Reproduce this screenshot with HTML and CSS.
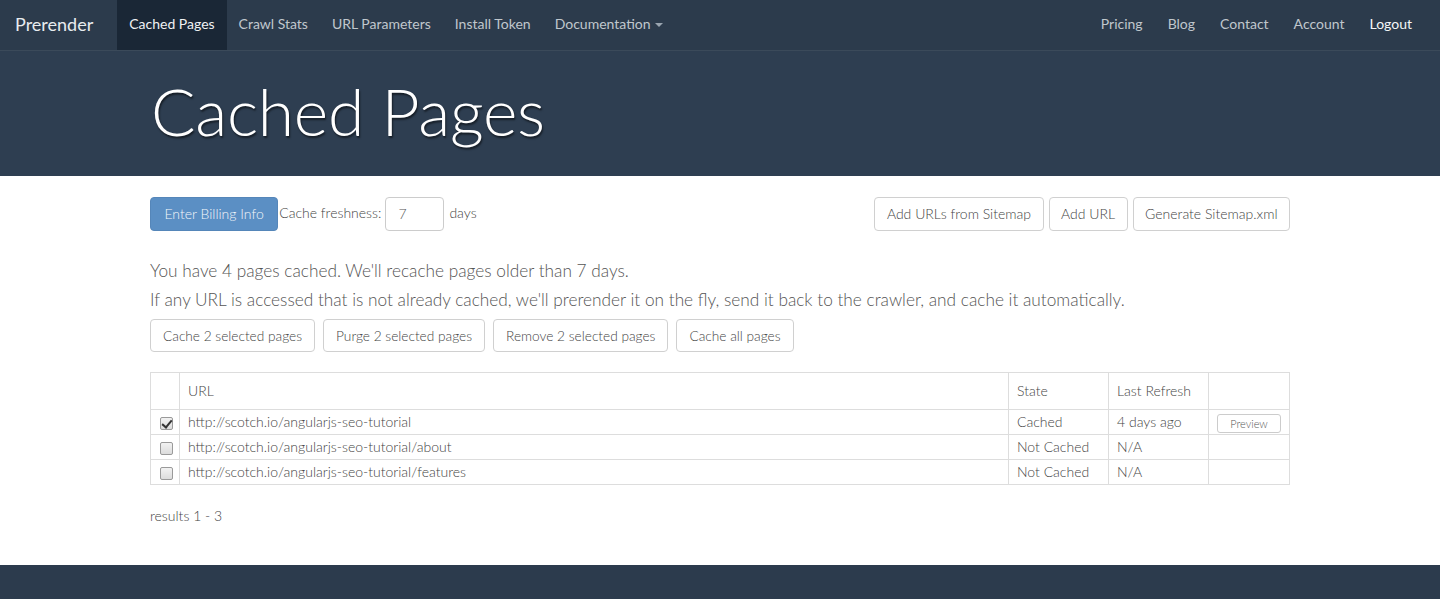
FILE: index.html
```html
<!DOCTYPE html>
<html>
<head>
<meta charset="utf-8">
<title>Prerender - Cached Pages</title>
<link rel="stylesheet" href="styles.css">
</head>
<body>
<nav class="navbar">
  <a class="brand" href="#">Prerender</a>
  <ul class="nav">
    <li class="active"><a href="#">Cached Pages</a></li>
    <li><a href="#">Crawl Stats</a></li>
    <li><a href="#">URL Parameters</a></li>
    <li><a href="#">Install Token</a></li>
    <li><a href="#">Documentation <span class="caret"></span></a></li>
  </ul>
  <ul class="nav nav-right">
    <li><a href="#">Pricing</a></li>
    <li><a href="#">Blog</a></li>
    <li><a href="#">Contact</a></li>
    <li><a href="#">Account</a></li>
    <li><a href="#" class="logout">Logout</a></li>
  </ul>
</nav>
<header class="jumbotron">
  <div class="container">
    <h1>Cached Pages</h1>
  </div>
</header>
<main class="container main">
  <div class="toolbar">
    <div class="left">
      <button class="btn btn-primary">Enter Billing Info</button>
      <label class="fresh">Cache freshness:</label>
      <input class="input" type="text" value="7">
      <span class="days">days</span>
    </div>
    <div class="right">
      <button class="btn">Add URLs from Sitemap</button>
      <button class="btn">Add URL</button>
      <button class="btn">Generate Sitemap.xml</button>
    </div>
  </div>
  <p class="lead">You have 4 pages cached. We'll recache pages older than 7 days.</p>
  <p class="lead">If any URL is accessed that is not already cached, we'll prerender it on the fly, send it back to the crawler, and cache it automatically.</p>
  <div class="actions">
    <button class="btn btn-sm">Cache 2 selected pages</button>
    <button class="btn btn-sm">Purge 2 selected pages</button>
    <button class="btn btn-sm">Remove 2 selected pages</button>
    <button class="btn btn-sm">Cache all pages</button>
  </div>
  <table class="table">
    <thead>
      <tr><th class="c-check"></th><th>URL</th><th class="c-state">State</th><th class="c-last">Last Refresh</th><th class="c-act"></th></tr>
    </thead>
    <tbody>
      <tr><td class="c-check"><input class="cb" type="checkbox" checked></td><td>http://scotch.io/angularjs-seo-tutorial</td><td>Cached</td><td>4 days ago</td><td class="c-act"><button class="btn-xs">Preview</button></td></tr>
      <tr><td class="c-check"><input class="cb" type="checkbox"></td><td>http://scotch.io/angularjs-seo-tutorial/about</td><td>Not Cached</td><td>N/A</td><td></td></tr>
      <tr><td class="c-check"><input class="cb" type="checkbox"></td><td>http://scotch.io/angularjs-seo-tutorial/features</td><td>Not Cached</td><td>N/A</td><td></td></tr>
    </tbody>
  </table>
  <p class="results">results 1 - 3</p>
</main>
<footer class="footer"></footer>
</body>
</html>
```
FILE: styles.css
```css
* { box-sizing: border-box; }
html, body { margin: 0; padding: 0; }
body {
  font-family: Lato, "Open Sans", "Liberation Sans", sans-serif;
  font-weight: 300;
  font-size: 14px;
  line-height: 20px;
  color: #444;
  background: #fff;
}
a { text-decoration: none; }

.navbar {
  height: 51px;
  background: #2c3b4c;
  border-bottom: 1px solid #3b4a5a;
  display: flex;
  align-items: stretch;
}
.brand {
  color: #e8ecef;
  font-size: 18px;
  font-weight: 400;
  padding: 0 24px 0 15px;
  line-height: 49px;
}
.nav {
  list-style: none;
  margin: 0;
  padding: 0;
  display: flex;
}
.nav li a {
  display: block;
  line-height: 48px;
  height: 50px;
  padding: 0 12px;
  color: #c0c7cd;
  font-size: 14px;
  font-weight: 400;
}
.nav li.active a { background: #1a2736; color: #f0f2f4; }
.nav-right { margin-left: auto; padding-right: 16px; }
.nav-right li a { padding: 0 12.5px; }
.nav li a.logout { color: #f4f6f8; padding-right: 12px; }
.caret {
  display: inline-block;
  width: 0; height: 0;
  border-top: 4px solid #9aa5b0;
  border-left: 4px solid transparent;
  border-right: 4px solid transparent;
  vertical-align: middle;
  margin-left: 1px;
}

.jumbotron {
  background: #2e3e51;
  height: 125px;
}
.container {
  width: 1170px;
  margin: 0 auto;
  padding: 0 15px;
}
.jumbotron h1 {
  margin: 0;
  padding: 20px 0 0 1px;
  font-size: 66px;
  line-height: 80px;
  font-weight: 300;
  color: #fff;
  letter-spacing: -0.3px;
  text-shadow: 1px 2px 2px rgba(0,0,0,0.55);
}

.main { padding-top: 21px; }
.toolbar { display: flex; justify-content: space-between; align-items: flex-start; }
.left { display: flex; align-items: center; }
.right { display: flex; gap: 5px; }
.btn {
  font-family: inherit;
  font-weight: 300;
  font-size: 14px;
  line-height: 20px;
  height: 34px;
  padding: 6px 12px;
  background: #fff;
  color: #444;
  border: 1px solid #d0d0d0;
  border-radius: 4px;
  cursor: pointer;
}
.right .btn { padding: 6px 11.5px; }
.btn-primary {
  background: #5b8fc4;
  border-color: #5586b9;
  color: #f3f6fa;
  padding: 6px 13.5px;
}
.fresh { padding: 0 4px 0 1px; margin-top: -3px; }
.input {
  width: 59px;
  height: 34px;
  border: 1px solid #ccc;
  border-radius: 4px;
  font-family: inherit;
  font-weight: 300;
  font-size: 14px;
  color: #555;
  padding: 4px 12px 6px;
}
.days { padding-left: 5px; margin-top: -3px; }

.lead {
  margin: 0;
  font-size: 17.25px;
  line-height: 29px;
  color: #555;
}
.toolbar + .lead { margin-top: 25px; }
.actions { display: flex; gap: 8px; margin-top: 5px; }
.btn-sm { height: 33px; font-size: 13.7px; padding: 6px 12px; }

.table {
  margin-top: 20px;
  width: 100%;
  border-collapse: collapse;
  border: 1px solid #ddd;
}
.table th, .table td {
  border: 1px solid #ddd;
  text-align: left;
  font-weight: 300;
  font-size: 14px;
  color: #444;
}
.table th { padding: 8px 8px; height: 37px; }
.table td { padding: 2px 8px; height: 25px; line-height: 20px; }
.c-check { width: 29px; }
.table td.c-check { padding: 0 0 0 9px; }
.cb {
  appearance: none;
  -webkit-appearance: none;
  margin: 0;
  width: 13px;
  height: 13px;
  border: 1px solid #9a9a9a;
  border-radius: 2px;
  background: linear-gradient(#f2f2f2, #dcdcdc);
  vertical-align: middle;
  position: relative;
}
.cb:checked::after {
  content: "";
  position: absolute;
  left: 3px;
  top: 0px;
  width: 4px;
  height: 8px;
  border-right: 2px solid #333;
  border-bottom: 2px solid #333;
  transform: rotate(40deg);
}
.c-state { width: 100px; }
.c-last { width: 100px; }
.c-act { width: 81px; }
.table td.c-act { padding: 0 8px; }
.btn-xs {
  font-family: inherit;
  font-weight: 300;
  font-size: 11px;
  line-height: 15px;
  height: 19px;
  width: 64px;
  padding: 1px 5px;
  background: #fff;
  color: #555;
  border: 1px solid #ccc;
  border-radius: 3px;
  vertical-align: middle;
}
.results { margin: 21px 0 0; font-size: 14px; color: #444; }

.footer {
  margin-top: 39px;
  height: 34px;
  background: #2c3b4d;
}
```
